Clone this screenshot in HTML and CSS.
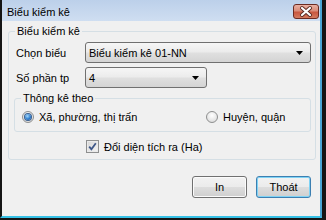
FILE: index.html
```html
<!DOCTYPE html>
<html lang="vi">
<head>
  <meta charset="UTF-8">
  <title>Biểu kiểm kê</title>
  <link rel="stylesheet" href="styles.css">
</head>
<body>
  <div class="window">
    <div class="titlebar">
      <span class="title">Biểu kiểm kê</span>
      <button class="close-btn" title="Đóng">
        <svg width="24" height="13" viewBox="0 0 24 13">
          <path d="M8 3 L16 10 M16 3 L8 10" stroke="#5a2a22" stroke-width="4" stroke-linecap="round"/>
          <path d="M8 3 L16 10 M16 3 L8 10" stroke="#fff" stroke-width="2.2" stroke-linecap="round"/>
        </svg>
      </button>
    </div>

    <div class="client">
      <fieldset class="group main-group">
        <legend>Biểu kiểm kê</legend>

        <div class="field-row">
          <label>Chọn biểu</label>
          <div class="combo combo-wide">
            <span>Biểu kiểm kê 01-NN</span>
            <svg class="arrow" width="7" height="4" viewBox="0 0 7 4"><polygon points="0,0 7,0 3.5,4" fill="#000"/></svg>
          </div>
        </div>

        <div class="field-row">
          <label>Số phần tp</label>
          <div class="combo combo-short">
            <span>4</span>
            <svg class="arrow" width="7" height="4" viewBox="0 0 7 4"><polygon points="0,0 7,0 3.5,4" fill="#000"/></svg>
          </div>
        </div>

        <fieldset class="group sub-group">
          <legend>Thông kê theo</legend>
          <div class="radio-row">
            <label class="radio-item first"><span class="radio checked"></span>Xã, phường, thị trấn</label>
            <label class="radio-item"><span class="radio"></span>Huyện, quận</label>
          </div>
        </fieldset>

        <label class="check-item">
          <span class="checkbox">
            <svg width="11" height="11" viewBox="0 0 11 11"><path d="M2.2 5.6 L4.4 8.2 L8.8 2.2" fill="none" stroke="#3d5687" stroke-width="1.8"/></svg>
          </span>Đổi diện tích ra (Ha)
        </label>
      </fieldset>

      <div class="actions">
        <button class="btn">In</button>
        <button class="btn btn-default">Thoát</button>
      </div>
    </div>
  </div>
</body>
</html>
```

FILE: styles.css
```css
body {
  margin: 0;
  background-color: #151515;
  font-family: "Liberation Sans", Arial, sans-serif;
  font-size: 11px;
  color: #000;
}
.window {
  width: 322px;
  height: 218px;
  box-sizing: border-box;
  border-left: 2px solid #151515;
  border-right: 2px solid #48a6d6;
  border-bottom: 2px solid #36c1e6;
  background-color: #f0f0f0;
  display: flex;
  flex-direction: column;
}
.titlebar {
  height: 21px;
  box-sizing: border-box;
  display: flex;
  justify-content: space-between;
  align-items: flex-start;
  padding-left: 5px;
  background: linear-gradient(#bcd0ea, #cfdef1);
}
.title {
  font-size: 11px;
  line-height: 13px;
  padding-top: 6px;
}
.close-btn {
  width: 26px;
  height: 15px;
  margin-top: 4px;
  margin-right: 1px;
  padding: 0;
  box-sizing: border-box;
  border: 1px solid #6b2b22;
  border-radius: 3px;
  background: linear-gradient(#eab0a2, #d98c79 45%, #c9573f 55%, #d37a5f);
  display: flex;
  align-items: center;
  justify-content: center;
}
.client {
  flex: 1;
  display: flex;
  flex-direction: column;
}
.group {
  margin: 0;
  padding: 0;
  border: 1px solid #d5dfe5;
  border-radius: 3px;
  min-width: 0;
}
.group legend {
  margin-left: 6px;
  padding: 0 2px;
  line-height: 13px;
}
.main-group {
  width: 308px;
  box-sizing: border-box;
  margin: 4px 0 0 6px;
  padding: 4px 0 5px 0;
}
.field-row {
  display: flex;
  align-items: center;
  height: 21px;
  padding-left: 7px;
  margin-bottom: 4px;
}
.field-row label {
  width: 69px;
}
.combo {
  height: 21px;
  box-sizing: border-box;
  border: 1px solid #707070;
  border-radius: 3px;
  background: linear-gradient(#f6f6f6, #ececec 45%, #dfdfdf 55%, #d4d4d4);
  display: flex;
  align-items: center;
  justify-content: space-between;
  padding: 0 7px 0 3px;
}
.combo-wide {
  width: 226px;
}
.combo-short {
  width: 122px;
}
.sub-group {
  width: 297px;
  box-sizing: border-box;
  margin: 2px 0 0 5px;
  padding: 4px 0 7px 0;
}
.radio-row {
  display: flex;
  align-items: center;
  height: 15px;
  padding-left: 7px;
}
.radio-item {
  display: flex;
  align-items: center;
}
.radio-item.first {
  width: 184px;
}
.radio {
  width: 12px;
  height: 12px;
  box-sizing: border-box;
  margin-right: 5px;
  border: 1px solid #8e8f8f;
  border-radius: 50%;
  background: radial-gradient(circle at 50% 35%, #ffffff, #e2e2e2 70%, #cfcfcf);
  display: flex;
  align-items: center;
  justify-content: center;
}
.radio.checked::after {
  content: "";
  width: 6px;
  height: 6px;
  border-radius: 50%;
  background: radial-gradient(circle at 40% 35%, #a6d8f8, #2f7fd0 55%, #154a8a);
  box-shadow: 0 0 0 1px #3a5f8f;
}
.check-item {
  display: flex;
  align-items: center;
  height: 15px;
  margin: 7px 0 0 77px;
}
.checkbox {
  width: 13px;
  height: 13px;
  box-sizing: border-box;
  margin-right: 5px;
  border: 1px solid #8e8f8f;
  background: linear-gradient(135deg, #d6d6d6, #f4f4f4);
  box-shadow: inset 0 0 0 1px #eaeaea;
  display: flex;
  align-items: center;
  justify-content: center;
}
.actions {
  display: flex;
  justify-content: flex-end;
  gap: 9px;
  margin-top: 16px;
  padding-right: 9px;
}
.btn {
  width: 55px;
  height: 22px;
  padding: 0;
  box-sizing: border-box;
  border: 1px solid #707070;
  border-radius: 3px;
  background: linear-gradient(#f2f2f2, #ebebeb 50%, #dddddd 51%, #cfcfcf);
  box-shadow: inset 0 0 0 1px #fbfbfb;
  font-family: "Liberation Sans", Arial, sans-serif;
  font-size: 11px;
  color: #000;
}
.btn-default {
  border-color: #3c7fb1;
  box-shadow: inset 0 0 0 1px #7fd3f5;
}
```
